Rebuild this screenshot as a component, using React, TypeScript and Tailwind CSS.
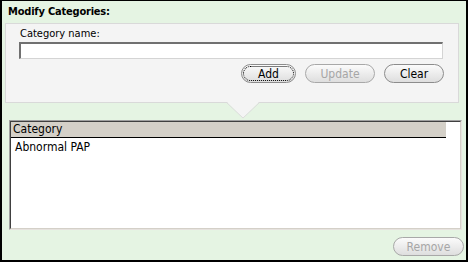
import React from "react";

const font = { fontFamily: '"DejaVu Sans Condensed", "DejaVu Sans", "Liberation Sans", sans-serif' };

function PillButton({ label, disabled, focused, width }: { label: string; disabled?: boolean; focused?: boolean; width: string }) {
  return (
    <button
      type="button"
      disabled={disabled}
      className={`${width} h-[19px] rounded-full border border-[#8c8c8c] bg-gradient-to-b from-[#fbfbfb] to-[#dedede] flex items-center justify-center p-[1px] text-[12px] leading-none ${
        disabled ? "text-[#a6a6a6] border-[#a8a8a8]" : "text-black"
      }`}
    >
      <span
        className={`w-full h-full rounded-full flex items-center justify-center ${
          focused ? "border border-dotted border-black" : "border border-transparent"
        }`}
      >
        {label}
      </span>
    </button>
  );
}

export default function App() {
  return (
    <div
      className="w-[468px] h-[262px] bg-[#e5f4e3] border-2 border-t border-black flex flex-col"
      style={font}
    >
      <div className="pl-[6px] pt-[5px] h-[22px] text-[11px] font-bold text-black leading-none tracking-[-0.2px]">
        Modify Categories:
      </div>

      <div className="relative ml-[3px] w-[454px] h-[80px] bg-[#f4f4f4] border border-[#d9d9d9] px-[13px] pt-[3px]">
        <div className="text-[11px] text-black leading-[14px] pl-[1px]">Category name:</div>
        <input
          type="text"
          className="block mt-[1px] w-[424px] h-[17px] bg-white border-t-2 border-l-2 border-b border-r border-t-[#707070] border-l-[#707070] border-b-[#d4d4d4] border-r-[#d4d4d4] outline-none text-[11px] px-1"
        />
        <div className="mt-[5px] flex justify-end gap-[9px] pr-[1px]">
          <PillButton label="Add" focused width="w-[55px]" />
          <PillButton label="Update" disabled width="w-[70px]" />
          <PillButton label="Clear" width="w-[60px]" />
        </div>
        <svg className="absolute left-[221px] top-[78px]" width="32" height="17" viewBox="0 0 32 17">
          <polygon points="0,0 32,0 16,16" fill="#f4f4f4" />
          <polyline points="0,1 16,16 32,1" fill="none" stroke="#dcdcdc" strokeWidth="1" />
        </svg>
      </div>

      <div className="ml-[7px] mt-[17px] w-[453px] h-[110px] border-t border-l border-b border-r border-t-[#a0a0a0] border-l-[#a0a0a0] border-b-[#e6e2de] border-r-[#e6e2de]">
        <div className="w-full h-full bg-white border-t border-l border-b border-r border-t-[#404040] border-l-[#404040] border-b-[#d4d0c8] border-r-[#d4d0c8] flex flex-col">
          <div className="w-[435px] h-[16px] bg-[#d4d0c8] border-b border-black text-[12px] leading-[15px] pl-[2px] text-black">
            Category
          </div>
          <div className="pl-[4px] pt-[2px] text-[12px] leading-[14px] text-black">Abnormal PAP</div>
        </div>
      </div>

      <div className="flex justify-end pr-[2px] mt-[7px]">
        <PillButton label="Remove" disabled width="w-[71px]" />
      </div>
    </div>
  );
}
